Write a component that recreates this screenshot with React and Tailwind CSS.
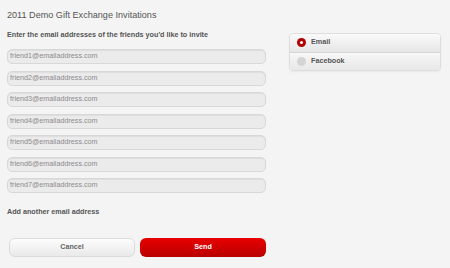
import React from 'react';

const friends = [1, 2, 3, 4, 5, 6, 7];

export default function App() {
  return (
    <div className="w-[450px] h-[268px] bg-[#f4f4f4] font-['Liberation_Sans',Arial,sans-serif] text-[#555] overflow-hidden">
      <div className="flex gap-[23px] pl-[7px]">
        {/* Left column */}
        <div className="w-[259px] flex flex-col">
          <h1 className="text-[9.1px] leading-[11px] mt-[10px] text-[#555]">
            2011 Demo Gift Exchange Invitations
          </h1>
          <p className="text-[7.2px] font-bold leading-[9px] mt-[9px] text-[#555]">
            Enter the email addresses of the friends you'd like to invite
          </p>

          <div className="flex flex-col gap-[6.5px] mt-[10px]">
            {friends.map((n) => (
              <div
                key={n}
                className="h-[15px] rounded-[5px] border border-[#d8d8d8] bg-[#ebebeb] shadow-[inset_0_1px_1px_rgba(0,0,0,0.06)] flex items-center pl-[2px] text-[7.2px] text-[#8e8a8e]"
              >
                friend{n}@emailaddress.com
              </div>
            ))}
          </div>

          <p className="text-[7.2px] font-bold leading-[9px] mt-[14px] text-[#555]">
            Add another email address
          </p>

          <div className="flex gap-[5px] mt-[22px] pl-[2px]">
            <button className="w-[126px] h-[19px] rounded-[6px] border border-[#dcdcdc] bg-gradient-to-b from-[#fdfdfd] to-[#e9e9e9] text-[7.2px] font-bold text-[#666]">
              Cancel
            </button>
            <button className="w-[126px] h-[19px] rounded-[6px] bg-gradient-to-b from-[#e80000] to-[#b80000] text-[7.2px] font-bold text-white">
              Send
            </button>
          </div>
        </div>

        {/* Right column */}
        <div className="mt-[33px] w-[152px] h-[38px] rounded-[4px] border border-[#dedede] shadow-[0_1px_2px_rgba(0,0,0,0.05)] flex flex-col overflow-hidden">
          <div className="flex-1 flex items-center gap-[5px] pl-[7px] bg-gradient-to-b from-[#fafafa] to-[#e6e6e6] border-b border-[#d6d6d6]">
            <span className="w-[9px] h-[9px] rounded-full bg-[#b30000] flex items-center justify-center">
              <span className="w-[3px] h-[3px] rounded-full bg-white" />
            </span>
            <span className="text-[7.2px] font-bold text-[#555]">Email</span>
          </div>
          <div className="flex-1 flex items-center gap-[5px] pl-[7px] bg-gradient-to-b from-[#f7f7f7] to-[#e8e8e8]">
            <span className="w-[9px] h-[9px] rounded-full bg-[#d4d4d4]" />
            <span className="text-[7.2px] font-bold text-[#555]">Facebook</span>
          </div>
        </div>
      </div>
    </div>
  );
}
